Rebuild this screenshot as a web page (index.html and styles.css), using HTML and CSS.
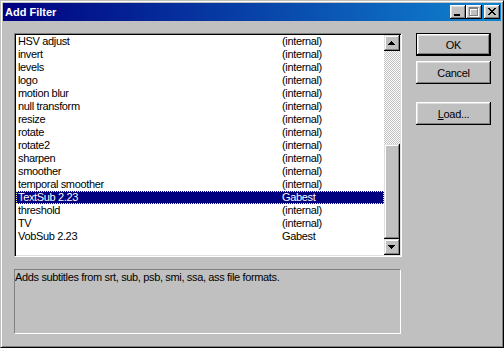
FILE: index.html
```html
<!DOCTYPE html>
<html>
<head>
<meta charset="utf-8">
<title>Add Filter</title>
<link rel="stylesheet" href="styles.css">
</head>
<body>
<div class="window">
  <div class="titlebar">
    <span class="title">Add Filter</span>
    <div class="caption-btns">
      <span class="cbtn"><svg width="16" height="14" viewBox="0 0 16 14" shape-rendering="crispEdges"><rect x="4" y="9" width="6" height="2" fill="#000"/></svg></span>
      <span class="cbtn"><svg width="16" height="14" viewBox="0 0 16 14" shape-rendering="crispEdges"><path d="M4 3h9v2H4zM4 5h1v7H4zM12 5h1v7h-1zM4 11h9v1H4z" fill="#fff"/><path d="M3 2h9v2H3zM3 4h1v7H3zM11 4h1v7h-1zM3 10h9v1H3z" fill="#808080"/></svg></span>
      <span class="cbtn close"><svg width="16" height="14" viewBox="0 0 16 14" shape-rendering="crispEdges"><path d="M4 3h2v1H4zM10 3h2v1h-2zM5 4h2v1H5zM9 4h2v1H9zM6 5h4v1H6zM7 6h2v1H7zM6 7h4v1H6zM5 8h2v1H5zM9 8h2v1H9zM4 9h2v1H4zM10 9h2v1h-2z" fill="#000"/></svg></span>
    </div>
  </div>
  <div class="content">
    <div class="left">
      <div class="listbox">
        <div class="rows">
          <div class="row"><span class="name">HSV adjust</span><span class="author">(internal)</span></div>
          <div class="row"><span class="name">invert</span><span class="author">(internal)</span></div>
          <div class="row"><span class="name">levels</span><span class="author">(internal)</span></div>
          <div class="row"><span class="name">logo</span><span class="author">(internal)</span></div>
          <div class="row"><span class="name">motion blur</span><span class="author">(internal)</span></div>
          <div class="row"><span class="name">null transform</span><span class="author">(internal)</span></div>
          <div class="row"><span class="name">resize</span><span class="author">(internal)</span></div>
          <div class="row"><span class="name">rotate</span><span class="author">(internal)</span></div>
          <div class="row"><span class="name">rotate2</span><span class="author">(internal)</span></div>
          <div class="row"><span class="name">sharpen</span><span class="author">(internal)</span></div>
          <div class="row"><span class="name">smoother</span><span class="author">(internal)</span></div>
          <div class="row"><span class="name">temporal smoother</span><span class="author">(internal)</span></div>
          <div class="row selected"><span class="name">TextSub 2.23</span><span class="author">Gabest</span></div>
          <div class="row"><span class="name">threshold</span><span class="author">(internal)</span></div>
          <div class="row"><span class="name">TV</span><span class="author">(internal)</span></div>
          <div class="row"><span class="name">VobSub 2.23</span><span class="author">Gabest</span></div>
        </div>
        <div class="scrollbar">
          <div class="sbtn"><svg width="16" height="16" viewBox="0 0 16 16" shape-rendering="crispEdges"><path d="M7 6h1v1H7zM6 7h3v1H6zM5 8h5v1H5zM4 9h7v1H4z" fill="#000"/></svg></div>
          <div class="track"></div>
          <div class="thumb"></div>
          <div class="sbtn"><svg width="16" height="16" viewBox="0 0 16 16" shape-rendering="crispEdges"><path d="M4 6h7v1H4zM5 7h5v1H5zM6 8h3v1H6zM7 9h1v1H7z" fill="#000"/></svg></div>
        </div>
      </div>
      <div class="desc">Adds subtitles from srt, sub, psb, smi, ssa, ass file formats.</div>
    </div>
    <div class="buttons">
      <button class="btn default">OK</button>
      <button class="btn cancel">Cancel</button>
      <button class="btn load"><u>L</u>oad...</button>
    </div>
  </div>
</div>
</body>
</html>
```

FILE: styles.css
```css
html, body {
  margin: 0;
  padding: 0;
  background: #c0c0c0;
}
body {
  width: 504px;
  height: 348px;
  overflow: hidden;
  font-family: "Liberation Sans", Arial, sans-serif;
  font-size: 11px;
}
.window {
  box-sizing: border-box;
  width: 504px;
  height: 348px;
  background: #c0c0c0;
  border: 1px solid;
  border-color: #c0c0c0 #000 #000 #c0c0c0;
  box-shadow: inset 1px 1px #fff, inset -1px -1px #808080;
  padding: 2px;
  display: flex;
  flex-direction: column;
}
.titlebar {
  height: 18px;
  flex: none;
  background: linear-gradient(90deg, #000080, #1084d0);
  display: flex;
  align-items: center;
  justify-content: space-between;
  padding: 0 1px 0 2px;
}
.title {
  color: #fff;
  font-weight: bold;
  font-size: 11px;
  line-height: 13px;
}
.caption-btns {
  display: flex;
}
.cbtn {
  display: block;
  width: 16px;
  height: 14px;
  background: #c0c0c0;
  box-shadow: inset -1px -1px #000, inset 1px 1px #fff, inset -2px -2px #808080, inset 2px 2px #dfdfdf;
}
.cbtn svg {
  display: block;
}
.cbtn.close {
  margin-left: 2px;
}
.content {
  display: flex;
  gap: 14px;
  padding: 12px 0 0 11px;
}
.left {
  width: 388px;
  display: flex;
  flex-direction: column;
  gap: 12px;
}
.listbox {
  box-sizing: border-box;
  width: 388px;
  height: 224px;
  background: #fff;
  border: 1px solid;
  border-color: #808080 #fff #fff #808080;
  box-shadow: inset 1px 1px #000, inset -1px -1px #dfdfdf;
  padding: 1px;
  display: flex;
}
.rows {
  flex: 1;
  display: flex;
  flex-direction: column;
}
.row {
  height: 13px;
  line-height: 13px;
  display: flex;
  padding-left: 2px;
  letter-spacing: -0.35px;
  white-space: nowrap;
  color: #000;
}
.row .name {
  width: 264px;
  flex: none;
}
.row.selected {
  background: #000080;
  color: #fff;
  outline: 1px dotted #ffff80;
  outline-offset: -1px;
}
.scrollbar {
  width: 16px;
  flex: none;
  display: flex;
  flex-direction: column;
}
.sbtn, .thumb {
  background: #c0c0c0;
  box-shadow: inset -1px -1px #000, inset 1px 1px #dfdfdf, inset -2px -2px #808080, inset 2px 2px #fff;
}
.sbtn {
  height: 16px;
  flex: none;
}
.sbtn svg {
  display: block;
}
.track {
  height: 93px;
  flex: none;
  background: repeating-conic-gradient(#c0c0c0 0 25%, #fff 0 50%) 0 0 / 2px 2px;
}
.thumb {
  flex: 1;
}
.desc {
  box-sizing: border-box;
  width: 387px;
  height: 65px;
  border: 1px solid;
  border-color: #808080 #fff #fff #808080;
  padding: 1px 0 0 0;
  line-height: 13px;
  letter-spacing: -0.35px;
  color: #000;
}
.buttons {
  display: flex;
  flex-direction: column;
  width: 75px;
}
.btn {
  box-sizing: border-box;
  width: 75px;
  height: 23px;
  margin: 0;
  padding: 0;
  border: 0;
  background: #c0c0c0;
  font-family: "Liberation Sans", Arial, sans-serif;
  font-size: 11px;
  letter-spacing: -0.3px;
  color: #000;
  box-shadow: inset -1px -1px #000, inset 1px 1px #fff, inset -2px -2px #808080, inset 2px 2px #dfdfdf;
}
.btn.default {
  box-shadow: inset 0 0 0 1px #000, inset -2px -2px #000, inset 2px 2px #fff, inset -3px -3px #808080, inset 3px 3px #dfdfdf;
}
.btn.cancel {
  margin-top: 5px;
}
.btn.load {
  margin-top: 18px;
}
.btn u {
  text-decoration: underline;
}
```
